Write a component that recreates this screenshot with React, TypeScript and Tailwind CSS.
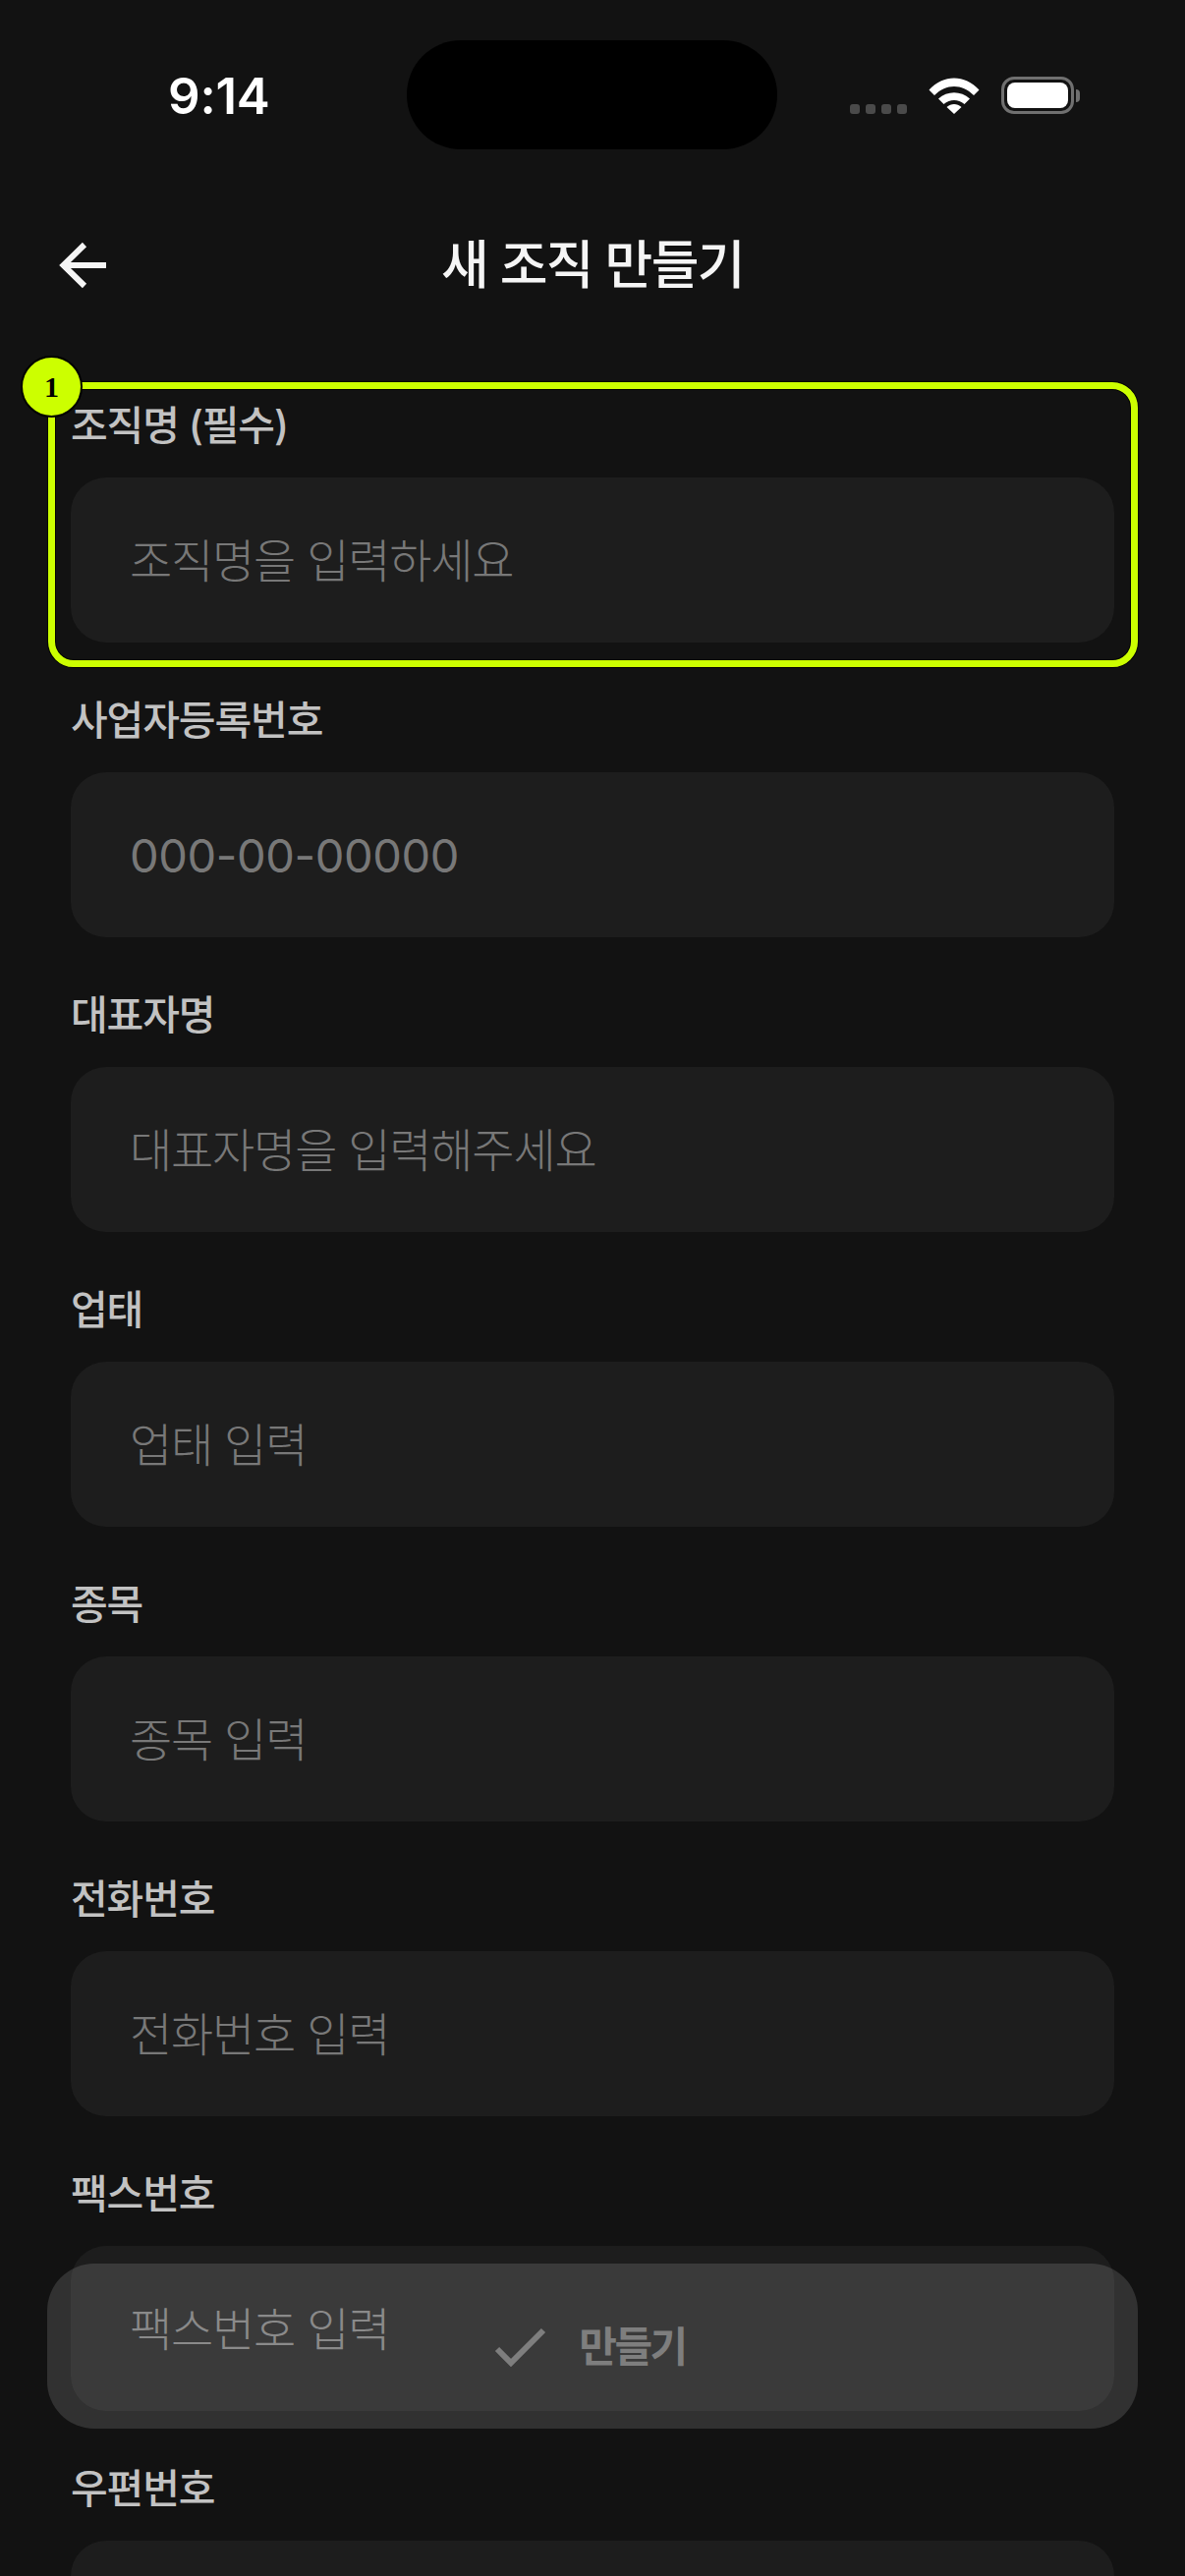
const FIELDS: [string, string, string][] = [
  ["조직명 (필수)", "조직명을 입력하세요", "font-light tracking-[-1.2px]"],
  ["사업자등록번호", "000-00-00000", "font-normal tracking-[-0.4px]"],
  ["대표자명", "대표자명을 입력해주세요", "font-light tracking-[-1.2px]"],
  ["업태", "업태 입력", "font-light tracking-[-1.2px]"],
  ["종목", "종목 입력", "font-light tracking-[-1.2px]"],
  ["전화번호", "전화번호 입력", "font-light tracking-[-1.2px]"],
  ["팩스번호", "팩스번호 입력", "font-light tracking-[-1.2px]"],
  ["우편번호", "", "font-light tracking-[-1.2px]"],
];

const FONT = "font-['Inter','Noto_Sans_CJK_KR',sans-serif]";

function Field({ label, placeholder, track }: { label: string; placeholder: string; track: string }) {
  return (
    <div className="flex flex-col gap-[24px]">
      <div className="h-[60px] pt-[2px] flex items-center whitespace-pre text-[41px] leading-[60px] font-medium tracking-[-1.1px] text-[#c2c2c2]">{label}</div>
      <div className={`h-[168px] shrink-0 rounded-[36px] bg-[#1d1d1d] px-[60px] pt-[2px] flex items-center text-[47px] text-[#787878] ${track}`}>
        {placeholder}
      </div>
    </div>
  );
}

export default function App() {
  return (
    <div className={`relative w-[1206px] h-[2622px] overflow-hidden bg-[#121212] ${FONT}`}>
      <div className="h-[180px] relative flex items-start">
        <div className="w-[414px] pt-[70px] pl-[171px] text-[51px] leading-[56px] font-semibold tracking-[-0.2px] text-white">9:14</div>
        <div className="mt-[41px] h-[111px] w-[377px] rounded-[55px] bg-black" />
        <div className="ml-[74px] mt-[78px] flex items-end gap-[22px]">
          <div className="flex gap-[6px] mb-0">
            {[0, 1, 2, 3].map((i) => (
              <div key={i} className="w-[10px] h-[10px] rounded-[3px] bg-[#4a4a4a]" />
            ))}
          </div>
          <svg width="52" height="38" viewBox="0 0 52 38" className="block">
            <path d="M0.5 13.5 C15 -2.5 37 -2.5 51.5 13.5 L46 19 C34 7 18 7 6 19 Z" fill="#fff" />
            <path d="M10 22.5 C19 14 33 14 42 22.5 L36.5 28 C30 22.5 22 22.5 15.500 28 Z" fill="#fff" />
            <path d="M18.500 31 C23 27 29 27 33.500 31 L26 38 Z" fill="#fff" />
          </svg>
          <div className="flex items-center gap-[2px]">
            <div className="w-[74px] h-[38px] rounded-[13px] border-[3px] border-[#707070] p-[3px]">
              <div className="w-full h-full rounded-[8px] bg-white" />
            </div>
            <div className="w-[4px] h-[13px] rounded-r-[4px] bg-[#707070]" />
          </div>
        </div>
      </div>

      <div className="h-[180px] relative flex items-center justify-center">
        <div className="absolute left-[48px] top-[0px] h-[180px] flex items-center">
          <svg width="72" height="72" viewBox="0 0 72 72" fill="none" stroke="#f5f5f5" strokeWidth="6" strokeLinecap="butt" strokeLinejoin="miter">
            <path d="M38 15 L16.500 36 L38 57" />
            <path d="M17 36 H60" />
          </svg>
        </div>
        <div className="pt-[2px] text-[53px] font-medium tracking-[-1.6px] text-[#f5f5f5]">새 조직 만들기</div>
      </div>

      <div className="px-[72px] pt-[42px] flex flex-col gap-[48px]">
        {FIELDS.map(([l, p, t]) => (
          <Field key={l} label={l} placeholder={p} track={t} />
        ))}
      </div>

      {/* tutorial highlight */}
      <div className="absolute left-[49px] top-[389px] w-[1109px] h-[290px] rounded-[26px] border-[7px] border-[#ccff00] shadow-[0_0_0_1px_#000,inset_0_0_0_1px_#000]" />
      <div className="absolute left-[21px] top-[362px] w-[63px] h-[63px] rounded-full bg-[#ccff00] border-[2px] border-black flex items-center justify-center text-[30px] font-bold text-black font-['Liberation_Serif',serif]">
        1
      </div>

      {/* submit */}
      <div className="absolute left-[48px] top-[2304px] w-[1110px] h-[168px] rounded-[48px] bg-white/[.13] pr-[9px] flex items-center justify-center gap-[30px]">
        <svg width="60" height="60" viewBox="0 0 60 60" fill="none" stroke="#7e7e7e" strokeWidth="6" strokeLinecap="butt" strokeLinejoin="miter">
          <path d="M7 33 L21 47 L54 14" />
        </svg>
        <span className="text-[42px] font-semibold tracking-[-2.5px] text-[#7e7e7e]">만들기</span>
      </div>
    </div>
  );
}
